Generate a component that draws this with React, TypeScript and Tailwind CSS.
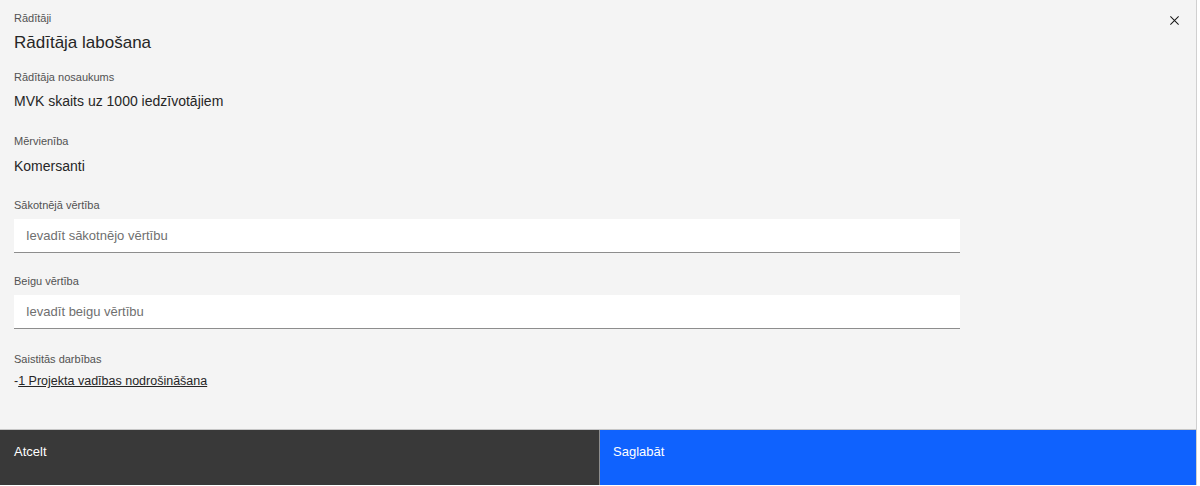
import React from "react";

function Field({ label, placeholder }: { label: string; placeholder: string }) {
  return (
    <div className="flex flex-col">
      <label className="text-[11px] leading-[14px] text-[#525252]">{label}</label>
      <input
        placeholder={placeholder}
        className="mt-[7px] w-[946px] h-[34px] bg-white border-b border-[#8d8d8d] px-3 text-[13px] text-[#161616] placeholder:text-[#6f6f6f] outline-none"
      />
    </div>
  );
}

function Info({ label, value }: { label: string; value: string }) {
  return (
    <div className="flex flex-col">
      <span className="text-[11px] leading-[14px] text-[#525252]">{label}</span>
      <span className="text-[14px] leading-[20px] text-[#262626] mt-[8px]">{value}</span>
    </div>
  );
}

export default function App() {
  return (
    <div
      className="w-[1200px] h-[486px] bg-white"
      style={{ fontFamily: '"Liberation Sans", Arial, sans-serif' }}
    >
      <div className="w-[1197px] h-[485px] bg-[#f4f4f4] border-r border-[#d0d0d0] flex flex-col">
        <div className="flex justify-between pl-[14px] pt-[11px] pr-[14px]">
          <div className="flex flex-col">
            <span className="text-[11px] leading-[14px] text-[#525252]">Rādītāji</span>
            <h2 className="text-[17px] leading-[24px] text-[#262626] mt-[6px]">Rādītāja labošana</h2>
          </div>
          <button className="w-[16px] h-[16px] mt-[1px] flex items-center justify-center text-[#161616]">
            <svg width="11" height="11" viewBox="0 0 12 12" fill="none" stroke="currentColor" strokeWidth="1.1">
              <path d="M1.5 1.5 L10.5 10.5 M10.5 1.5 L1.5 10.5" />
            </svg>
          </button>
        </div>

        <div className="flex flex-col pl-[14px] mt-[15px]">
          <span className="text-[11px] leading-[14px] text-[#525252]">Rādītāja nosaukums</span>
          <span className="text-[14px] leading-[20px] text-[#262626] mt-[7px]">MVK skaits uz 1000 iedzīvotājiem</span>
          <div className="mt-[23px]">
            <Info label="Mērvienība" value="Komersanti" />
          </div>
          <div className="mt-[22px]">
            <Field label="Sākotnējā vērtība" placeholder="Ievadīt sākotnējo vērtību" />
          </div>
          <div className="mt-[21px]">
            <Field label="Beigu vērtība" placeholder="Ievadīt beigu vērtību" />
          </div>
          <div className="mt-[23px] flex flex-col">
            <span className="text-[11px] leading-[14px] text-[#525252]">Saistitās darbības</span>
            <div className="mt-[6px] text-[12.5px] leading-[18px] text-[#262626]">
              -<a href="#" className="underline">1 Projekta vadības nodrošināšana</a>
            </div>
          </div>
        </div>

        <div className="flex-1" />

        <div className="flex h-[56px] border-t border-[#c6c6c6]">
          <button className="w-[599px] h-full bg-[#393939] text-white text-[13px] leading-[18px] text-left pl-[14px] pt-[13px] flex items-start">
            Atcelt
          </button>
          <div className="w-[1px] bg-[#8d8d8d]" />
          <button className="flex-1 h-full bg-[#0f62fe] text-white text-[13px] leading-[18px] text-left pl-[13px] pt-[13px] flex items-start">
            Saglabāt
          </button>
        </div>
      </div>
    </div>
  );
}
